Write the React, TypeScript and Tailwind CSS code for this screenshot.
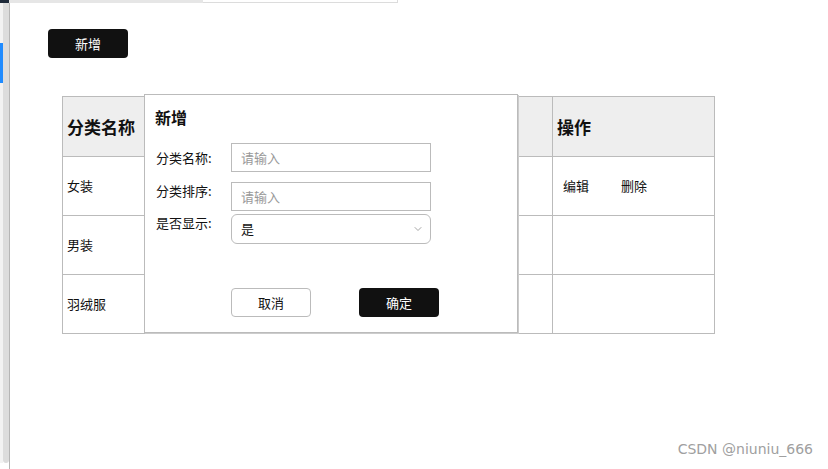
import { ChevronDown } from 'lucide-react';

const ROWS = ['女装', '男装', '羽绒服'];

export default function App() {
  return (
    <div
      className="relative w-[828px] h-[469px] overflow-hidden bg-white text-[#111]"
      style={{ fontFamily: '"Noto Sans CJK SC", "Noto Sans", sans-serif' }}
    >
      {/* top strip */}
      <div className="flex h-[3px]">
        <div className="w-[9px] bg-[#1e2a3a]" />
        <div className="w-[194px] bg-[#e6e6e6]" />
        <div className="w-[195px] bg-white border-b border-r border-[#dcdcdc]" />
      </div>

      <div className="flex h-[466px]">
        {/* left edge */}
        <div className="flex h-[460px]">
          <div className="w-[3px] flex flex-col bg-[#f2f2f2]">
            <div className="h-[40px]" />
            <div className="h-[40px] bg-[#1f8bff]" />
          </div>
          <div className="w-[6px] bg-[#dcdcdc] rounded-b-sm" />
        </div>
        <div className="w-px bg-[#b5b5b5]" />

        {/* content */}
        <div className="relative flex-1 pl-[38px] pt-[26px]">
          <button className="w-[80px] h-[29px] rounded-[4px] bg-[#111] text-white text-[13px]">新增</button>

          <table className="mt-[38px] ml-[14px] border-collapse text-[13px]">
            <colgroup>
              <col className="w-[83px]" />
              <col className="w-[373px]" />
              <col className="w-[34px]" />
              <col className="w-[162px]" />
            </colgroup>
            <thead>
              <tr className="h-[60px] bg-[#eeeeee]">
                <th className="border border-[#bbb] text-left pl-[4px] text-[17px] font-bold">分类名称</th>
                <th className="border border-[#bbb]" />
                <th className="border border-[#bbb]" />
                <th className="border border-[#bbb] text-left pl-[4px] text-[17px] font-bold">操作</th>
              </tr>
            </thead>
            <tbody>
              {ROWS.map((name, i) => (
                <tr key={name} className="h-[59px]">
                  <td className="border border-[#bbb] pl-[4px]">{name}</td>
                  <td className="border border-[#bbb]" />
                  <td className="border border-[#bbb]" />
                  <td className="border border-[#bbb] pl-[10px]">
                    {i === 0 && (
                      <div className="flex gap-[32px]">
                        <span>编辑</span>
                        <span>删除</span>
                      </div>
                    )}
                  </td>
                </tr>
              ))}
            </tbody>
          </table>

          {/* modal */}
          <div className="absolute left-[134px] top-[91px] w-[374px] h-[239px] bg-white border border-[#bbb] shadow-[1px_1px_0_#ccc]">
            <div className="pl-[10px] pt-[10px] text-[16px] font-bold">新增</div>
            <div className="pl-[11px] pt-[14px] flex flex-col gap-[3px] text-[13px]">
              <div className="flex items-center">
                <span className="w-[75px]">分类名称:</span>
                <input
                  placeholder="请输入"
                  className="w-[200px] h-[29px] border border-[#bbb] px-[9px] text-[13px] outline-none placeholder:text-[#999]"
                />
              </div>
              <div className="flex items-start pt-[7px]">
                <span className="w-[75px] leading-[18px]">分类排序:</span>
                <input
                  placeholder="请输入"
                  className="w-[200px] h-[29px] border border-[#bbb] px-[9px] text-[13px] outline-none placeholder:text-[#999]"
                />
              </div>
              <div className="flex items-start">
                <span className="w-[75px] leading-[18px]">是否显示:</span>
                <div className="w-[200px] h-[30px] border border-[#bbb] rounded-[6px] flex items-center justify-between pl-[9px] pr-[6px]">
                  <span>是</span>
                  <ChevronDown className="w-[12px] h-[12px] text-[#888]" strokeWidth={1.5} />
                </div>
              </div>
            </div>
            <div className="flex gap-[48px] pl-[86px] pt-[44px] text-[13px]">
              <button className="w-[80px] h-[29px] rounded-[4px] border border-[#bbb] bg-white">取消</button>
              <button className="w-[80px] h-[29px] rounded-[4px] bg-[#111] text-white">确定</button>
            </div>
          </div>

          <div
            className="absolute right-[15px] top-[436px] text-[14px] text-[#a0a0a0]"
            style={{ fontFamily: '"DejaVu Sans", Verdana, sans-serif' }}
          >
            CSDN @niuniu_666
          </div>
        </div>
      </div>
    </div>
  );
}
